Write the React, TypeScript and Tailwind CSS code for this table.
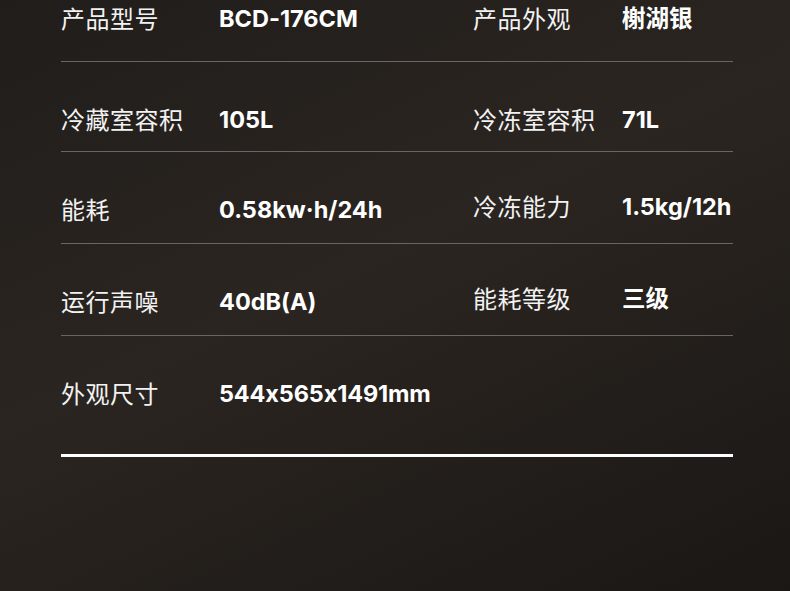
import React from "react";

type Cell = { label: string; value: string };

const rows: { left: Cell; right?: Cell; h: string; pt: string; border: string }[] = [
  { left: { label: "产品型号", value: "BCD-176CM" }, right: { label: "产品外观", value: "榭湖银" }, h: "h-[62px]", pt: "pt-[6px]", border: "border-b border-[#6a6562]" },
  { left: { label: "冷藏室容积", value: "105L" }, right: { label: "冷冻室容积", value: "71L" }, h: "h-[90px]", pt: "pt-[45px]", border: "border-b border-[#6a6562]" },
  { left: { label: "能耗", value: "0.58kw·h/24h" }, right: { label: "冷冻能力", value: "1.5kg/12h" }, h: "h-[92px]", pt: "pt-[45px]", border: "border-b border-[#6a6562]" },
  { left: { label: "运行声噪", value: "40dB(A)" }, right: { label: "能耗等级", value: "三级" }, h: "h-[92px]", pt: "pt-[45px]", border: "border-b border-[#6a6562]" },
  { left: { label: "外观尺寸", value: "544x565x1491mm" }, h: "h-[121px]", pt: "pt-[45px]", border: "border-b-[3px] border-white" },
];

const labelFont = { fontFamily: '"Noto Sans CJK SC", "Noto Sans", sans-serif' };
const valueFont = { fontFamily: 'Inter, "Noto Sans CJK SC", sans-serif' };

function CellView({ cell, labelW, shift }: { cell: Cell; labelW: string; shift?: boolean }) {
  const tight = cell.value === "544x565x1491mm";
  return (
    <div className={`flex h-[24px] items-center ${shift ? "-mt-[3px]" : ""}`}>
      <div className={`${labelW} shrink-0 text-[24px] leading-[24px] text-[#f2f2f2] tracking-[0.5px]`} style={labelFont}>
        {cell.label}
      </div>
      <div
        className={`mt-[2px] text-[23.5px] leading-[24px] font-bold text-white [font-feature-settings:'calt'_0] ${tight ? "tracking-[-0.15px]" : ""}`}
        style={valueFont}
      >
        {cell.value}
      </div>
    </div>
  );
}

export default function App() {
  return (
    <div className="w-[790px] h-[591px] overflow-hidden bg-[linear-gradient(155deg,#211d1a_0%,#2a2521_45%,#1b1714_100%)]">
      <div className="ml-[61px] w-[672px]">
        {rows.map((r, i) => (
          <div key={i} className={`${r.h} ${r.pt} ${r.border} box-border grid grid-cols-[412px_1fr] items-start`}>
            <CellView cell={r.left} labelW="w-[158px]" />
            {r.right ? <CellView cell={r.right} labelW="w-[149px]" shift={i === 2 || i === 3} /> : <div />}
          </div>
        ))}
      </div>
    </div>
  );
}
